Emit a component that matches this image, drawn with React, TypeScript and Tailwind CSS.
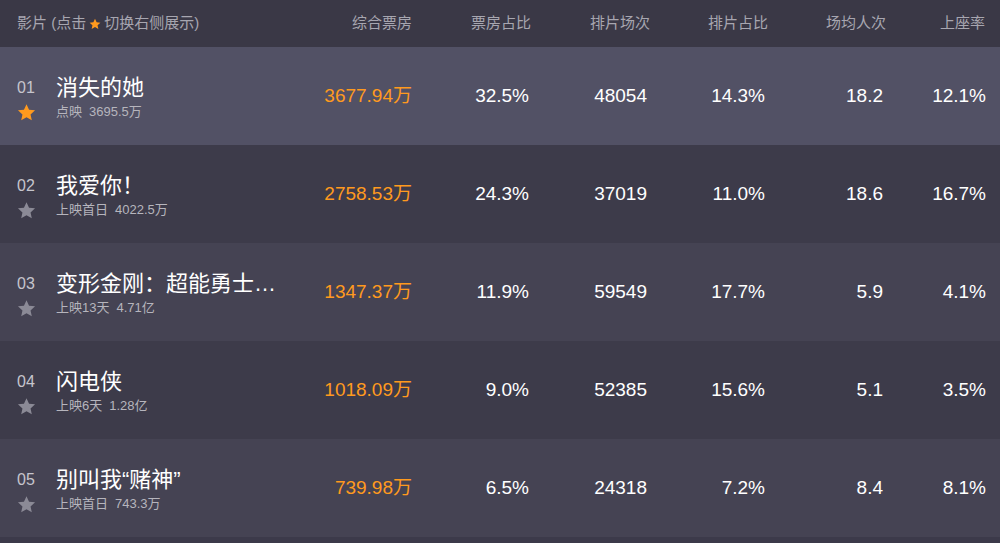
const films = [
  { no: "01", title: "消失的她", tag: "点映", total: "3695.5万", box: "3677.94万", boxRate: "32.5%", shows: "48054", showRate: "14.3%", avg: "18.2", seat: "12.1%", active: true },
  { no: "02", title: "我爱你！", tag: "上映首日", total: "4022.5万", box: "2758.53万", boxRate: "24.3%", shows: "37019", showRate: "11.0%", avg: "18.6", seat: "16.7%", active: false },
  { no: "03", title: "变形金刚：超能勇士…", tag: "上映13天", total: "4.71亿", box: "1347.37万", boxRate: "11.9%", shows: "59549", showRate: "17.7%", avg: "5.9", seat: "4.1%", active: false },
  { no: "04", title: "闪电侠", tag: "上映6天", total: "1.28亿", box: "1018.09万", boxRate: "9.0%", shows: "52385", showRate: "15.6%", avg: "5.1", seat: "3.5%", active: false },
  { no: "05", title: "别叫我“赌神”", tag: "上映首日", total: "743.3万", box: "739.98万", boxRate: "6.5%", shows: "24318", showRate: "7.2%", avg: "8.4", seat: "8.1%", active: false },
];

const rowBg = ["bg-[#525165]", "bg-[#3d3b4a]", "bg-[#454353]", "bg-[#3d3b4a]", "bg-[#454353]"];

function Star({ size, color }: { size: number; color: string }) {
  return (
    <svg width={size} height={size} viewBox="0 0 24 24" fill={color}>
      <path d="M12 1.5l3.2 7 7.6.8-5.7 5.1 1.6 7.5L12 18l-6.7 3.9 1.6-7.5-5.7-5.1 7.6-.8z" />
    </svg>
  );
}

export default function App() {
  return (
    <main
      className="min-h-[543px] w-[1000px] bg-[#3c3a4a] text-white"
      style={{ fontFamily: '"Liberation Sans", "Noto Sans CJK SC", sans-serif' }}
    >
      <div className="flex h-[47px] items-center bg-[#3a3846] text-[15px] text-[#a7a6b0]">
        <div className="flex w-[294px] items-center pl-[17px]">
          影片 (点击
          <span className="mx-[3px] inline-flex">
            <Star size={12} color="#ff9a1e" />
          </span>
          切换右侧展示)
        </div>
        <div className="w-[118px] text-right">综合票房</div>
        <div className="w-[119px] text-right">票房占比</div>
        <div className="w-[119px] text-right">排片场次</div>
        <div className="w-[118px] text-right">排片占比</div>
        <div className="w-[118px] text-right">场均人次</div>
        <div className="w-[99px] text-right">上座率</div>
      </div>

      {films.map((f, i) => (
        <div key={f.no} className={`flex h-[98px] items-center ${rowBg[i]}`}>
          <div className="grid w-[294px] grid-cols-[39px_1fr] pl-[17px] pt-[6px]">
            <div className="flex h-[26px] items-center text-[16px] text-[#c6c5cd]">{f.no}</div>
            <div className="h-[26px] whitespace-nowrap text-[22px] leading-[26px] text-white">{f.title}</div>
            <div className="flex h-[23px] items-center">
              <Star size={19} color={f.active ? "#ff9a1e" : "#8b8a96"} />
            </div>
            <div className="flex h-[23px] items-center text-[13px] text-[#b6b5bd]">
              {f.tag}
              <span className="ml-[7px]">{f.total}</span>
            </div>
          </div>
          <div className="w-[118px] text-right text-[19px] text-[#ff9a1e]">{f.box}</div>
          <div className="w-[117px] text-right text-[19px]">{f.boxRate}</div>
          <div className="w-[118px] text-right text-[19px]">{f.shows}</div>
          <div className="w-[118px] text-right text-[19px]">{f.showRate}</div>
          <div className="w-[118px] text-right text-[19px]">{f.avg}</div>
          <div className="w-[103px] text-right text-[19px]">{f.seat}</div>
        </div>
      ))}
    </main>
  );
}
